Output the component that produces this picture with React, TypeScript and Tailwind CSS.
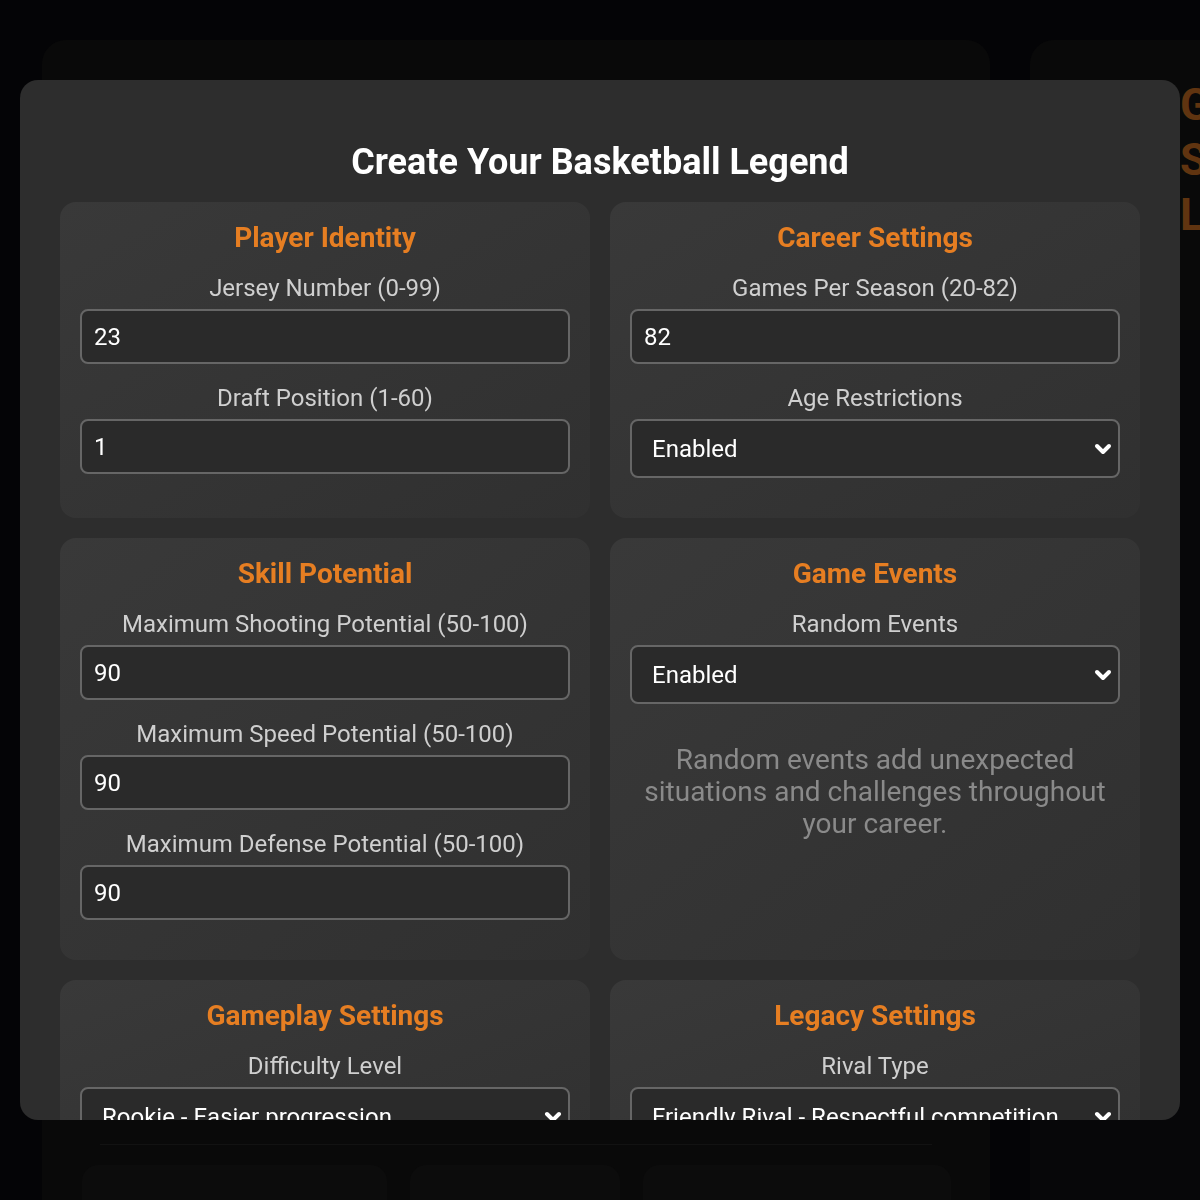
import React from "react";
import { ChevronDown } from "lucide-react";

const font = { fontFamily: "Roboto, 'Noto Sans', Arial, sans-serif" };

function Label({ children }: { children: React.ReactNode }) {
  return (
    <div className="text-[24px] leading-[28px] mb-[7px] text-center text-[#cfcfcf]">{children}</div>
  );
}

function NumInput({ label, value }: { label: string; value: string }) {
  return (
    <div className="mb-5">
      <Label>{label}</Label>
      <input
        readOnly
        value={value}
        className="block w-full h-[55px] rounded-lg border-2 border-[#666666] bg-[#2a2a2a] pl-3 text-[24px] text-white outline-none"
        style={font}
      />
    </div>
  );
}

function Select({ label, value }: { label: string; value: string }) {
  return (
    <div className="mb-5">
      <Label>{label}</Label>
      <div className="relative">
        <select
          value={value}
          onChange={() => {}}
          className="block w-full h-[59px] appearance-none rounded-lg border-2 border-[#666666] bg-[#2a2a2a] pl-[20px] text-[24px] text-white outline-none"
          style={font}
        >
          <option>{value}</option>
        </select>
        <ChevronDown
          className="pointer-events-none absolute right-[5px] top-1/2 -translate-y-1/2 text-white"
          size={24}
          strokeWidth={4}
        />
      </div>
    </div>
  );
}

function Card({ title, children }: { title: string; children: React.ReactNode }) {
  return (
    <div className="rounded-[16px] bg-gradient-to-br from-[#393939] to-[#303030] px-5 pt-5 pb-5">
      <h3 className="text-[28px] leading-[32px] font-bold text-[#e67e22] text-center mb-5">{title}</h3>
      {children}
    </div>
  );
}

export default function App() {
  return (
    <div className="min-h-[1200px] w-[1200px] overflow-hidden bg-[#050507] relative" style={font}>
      {/* background page */}
      <div className="flex gap-10 pl-[42px] pt-[40px]">
        <div className="w-[948px] h-[1200px] shrink-0 rounded-[24px] bg-[#0b0b0b] flex flex-col">
          <div className="h-[1105px] mx-[58px] border-b border-[#151515]" />
          <div className="flex gap-[23px] pl-[40px] pt-[20px]">
            <div className="w-[305px] h-[60px] rounded-[16px] bg-[#0e0e0e]" />
            <div className="w-[210px] h-[60px] rounded-[16px] bg-[#0e0e0e]" />
            <div className="w-[308px] h-[60px] rounded-[16px] bg-[#0e0e0e]" />
          </div>
        </div>
        <div className="w-[300px] shrink-0 flex flex-col">
          <div className="h-[290px] rounded-t-[24px] bg-[#0b0b0b] pl-[150px] pt-[38px] text-[44px] leading-[55px] font-bold text-[#6b3a12]">
            <div>GOAT</div>
            <div>Stats</div>
            <div>Legacy</div>
          </div>
          <div className="h-[900px] bg-[#08080b]" />
        </div>
      </div>

      {/* overlay */}
      <div className="fixed inset-0 bg-black/10">
        <div className="absolute left-[20px] top-[80px] w-[1160px] h-[1040px] overflow-hidden rounded-[18px] bg-[#2d2d2d] px-10 pt-10">
          <h2 className="mt-5 mb-[18px] text-center text-[36px] leading-[44px] font-bold text-white">
            Create Your Basketball Legend
          </h2>
          <div className="grid grid-cols-2 gap-5">
            <Card title="Player Identity">
              <NumInput label="Jersey Number (0-99)" value="23" />
              <NumInput label="Draft Position (1-60)" value="1" />
            </Card>
            <Card title="Career Settings">
              <NumInput label="Games Per Season (20-82)" value="82" />
              <Select label="Age Restrictions" value="Enabled" />
            </Card>
            <Card title="Skill Potential">
              <NumInput label="Maximum Shooting Potential (50-100)" value="90" />
              <NumInput label="Maximum Speed Potential (50-100)" value="90" />
              <NumInput label="Maximum Defense Potential (50-100)" value="90" />
            </Card>
            <Card title="Game Events">
              <Select label="Random Events" value="Enabled" />
              <p className="mt-10 px-2 text-center text-[28px] leading-[32px] text-[#8a8a8a]">
                Random events add unexpected situations and challenges throughout your career.
              </p>
            </Card>
            <Card title="Gameplay Settings">
              <Select label="Difficulty Level" value="Rookie - Easier progression" />
            </Card>
            <Card title="Legacy Settings">
              <Select label="Rival Type" value="Friendly Rival - Respectful competition" />
            </Card>
          </div>
        </div>
      </div>
    </div>
  );
}
